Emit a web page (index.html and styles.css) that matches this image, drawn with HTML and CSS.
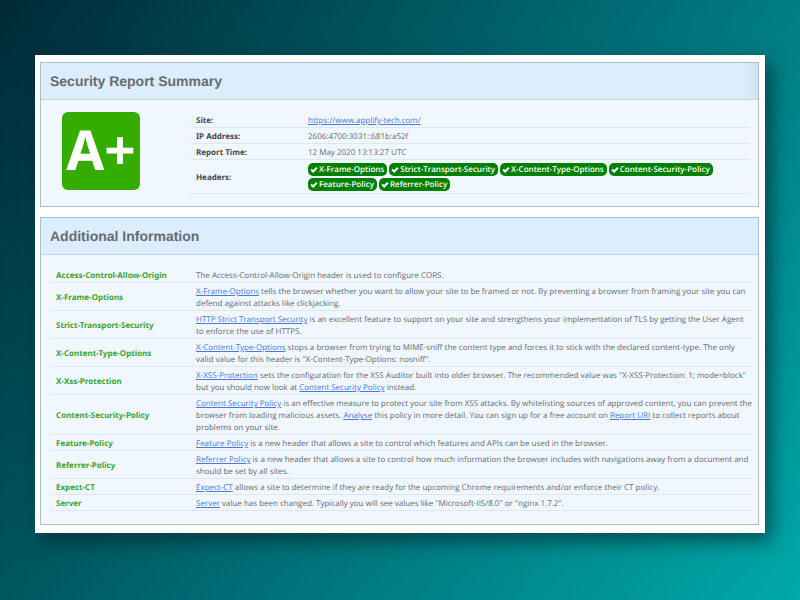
FILE: index.html
```html
<!DOCTYPE html>
<html lang="en">
<head>
<meta charset="utf-8">
<title>Security Report</title>
<link rel="stylesheet" href="styles.css">
</head>
<body>
<svg class="sprite" aria-hidden="true"><symbol id="check" viewBox="0 0 16 16"><path d="M.8 8.4 3.6 5.6 6.2 8.2 12.4 2 15.2 4.8 6.2 13.8z"/></symbol></svg>
<main class="sheet">
  <section class="panel">
    <h1 class="panel-title shaded">Security Report Summary</h1>
    <div class="panel-body summary">
      <div class="grade">A+</div>
      <table class="facts">
        <tr><th scope="row">Site:</th><td><a href="#">https://www.applify-tech.com/</a></td></tr>
        <tr><th scope="row">IP Address:</th><td>2606:4700:3031::681b:a52f</td></tr>
        <tr><th scope="row">Report Time:</th><td>12 May 2020 13:13:27 UTC</td></tr>
        <tr><th scope="row">Headers:</th><td>
          <ul class="pills">
            <li class="pill"><svg class="tick"><use href="#check"/></svg>X-Frame-Options</li>
            <li class="pill"><svg class="tick"><use href="#check"/></svg>Strict-Transport-Security</li>
            <li class="pill"><svg class="tick"><use href="#check"/></svg>X-Content-Type-Options</li>
            <li class="pill"><svg class="tick"><use href="#check"/></svg>Content-Security-Policy</li>
            <li class="pill"><svg class="tick"><use href="#check"/></svg>Feature-Policy</li>
            <li class="pill"><svg class="tick"><use href="#check"/></svg>Referrer-Policy</li>
          </ul>
        </td></tr>
      </table>
    </div>
  </section>
  <section class="panel">
    <h2 class="panel-title">Additional Information</h2>
    <div class="panel-body information">
      <table class="facts details">
        <tr><th scope="row">Access-Control-Allow-Origin</th><td>The Access-Control-Allow-Origin header is used to configure CORS.</td></tr>
        <tr><th scope="row">X-Frame-Options</th><td><a href="#">X-Frame-Options</a> tells the browser whether you want to allow your site to be framed or not. By preventing a browser from framing your site you can defend against attacks like clickjacking.</td></tr>
        <tr><th scope="row">Strict-Transport-Security</th><td><a href="#">HTTP Strict Transport Security</a> is an excellent feature to support on your site and strengthens your implementation of TLS by getting the User Agent to enforce the use of HTTPS.</td></tr>
        <tr><th scope="row">X-Content-Type-Options</th><td><a href="#">X-Content-Type-Options</a> stops a browser from trying to MIME-sniff the content type and forces it to stick with the declared content-type. The only valid value for this header is "X-Content-Type-Options: nosniff".</td></tr>
        <tr><th scope="row">X-Xss-Protection</th><td><a href="#">X-XSS-Protection</a> sets the configuration for the XSS Auditor built into older browser. The recommended value was "X-XSS-Protection: 1; mode=block" but you should now look at <a href="#">Content Security Policy</a> instead.</td></tr>
        <tr><th scope="row">Content-Security-Policy</th><td><a href="#">Content Security Policy</a> is an effective measure to protect your site from XSS attacks. By whitelisting sources of approved content, you can prevent the browser from loading malicious assets. <a href="#">Analyse</a> this policy in more detail. You can sign up for a free account on <a href="#">Report URI</a> to collect reports about problems on your site.</td></tr>
        <tr><th scope="row">Feature-Policy</th><td><a href="#">Feature Policy</a> is a new header that allows a site to control which features and APIs can be used in the browser.</td></tr>
        <tr><th scope="row">Referrer-Policy</th><td><a href="#">Referrer Policy</a> is a new header that allows a site to control how much information the browser includes with navigations away from a document and should be set by all sites.</td></tr>
        <tr><th scope="row">Expect-CT</th><td><a href="#">Expect-CT</a> allows a site to determine if they are ready for the upcoming Chrome requirements and/or enforce their CT policy.</td></tr>
        <tr><th scope="row">Server</th><td><a href="#">Server</a> value has been changed. Typically you will see values like "Microsoft-IIS/8.0" or "nginx 1.7.2".</td></tr>
      </table>
    </div>
  </section>
</main>
</body>
</html>
```
FILE: styles.css
```css
* { box-sizing: border-box; }
body {
  margin: 0;
  min-height: 100vh;
  padding: 55px 35px 67px;
  background: linear-gradient(125deg, #002a38, #00a9aa);
  font: 8px/12px "Open Sans", sans-serif;
  text-rendering: geometricPrecision;
  color: #666b70;
}
.sprite { position: absolute; width: 0; height: 0; }
.sheet {
  display: flex;
  flex-direction: column;
  gap: 10px;
  padding: 7px 6px 8px 5px;
  background: #fff;
  box-shadow: 6px 8px 18px rgba(0, 30, 35, 0.6);
}
.panel {
  border: 1px solid #a9c0c6;
  background: #f0f7ff;
}
.panel-title {
  margin: 0;
  padding: 9px;
  border-bottom: 1px solid #c3d6e0;
  background: #dcedfe;
  font: bold 14px/18px "Liberation Sans", sans-serif;
  color: #666c72;
}
.shaded { background: linear-gradient(to left, #d1e1ee, #dcedfe 14px); }
.panel-body { padding: 12px 9px; }
.summary {
  display: flex;
  align-items: flex-start;
  gap: 50px;
}
.information { padding: 12px 6px 13px 9px; }
.grade {
  flex: none;
  width: 78px;
  height: 78px;
  margin-left: 12px;
  border-radius: 6px;
  background: #35ad00;
  color: #fff;
  font: bold 55px/76px "Noto Sans", sans-serif;
  text-align: center;
}
.facts {
  width: 100%;
  border-collapse: separate;
  border-spacing: 0;
}
.facts th, .facts td {
  padding: 3px 0 0 6px;
  border-bottom: 1px solid #dfe7ec;
  text-align: left;
  vertical-align: middle;
}
.facts th {
  width: 112px;
  color: #444a50;
  font-family: "Noto Sans", sans-serif;
}
.details th {
  width: 140px;
  color: #3ba52f;
}
.facts a { color: #4a78dc; }
.pills {
  display: flex;
  flex-wrap: wrap;
  gap: 2px;
  margin: 0;
  padding: 0 0 2px;
  list-style: none;
}
.pill {
  display: flex;
  align-items: center;
  gap: 1px;
  padding: 0 3px 0 2px;
  border-radius: 5px;
  background: #008000;
  color: #fff;
  font-weight: 600;
  line-height: 13px;
}
.tick {
  width: 8px;
  height: 8px;
  fill: #fff;
}
```
